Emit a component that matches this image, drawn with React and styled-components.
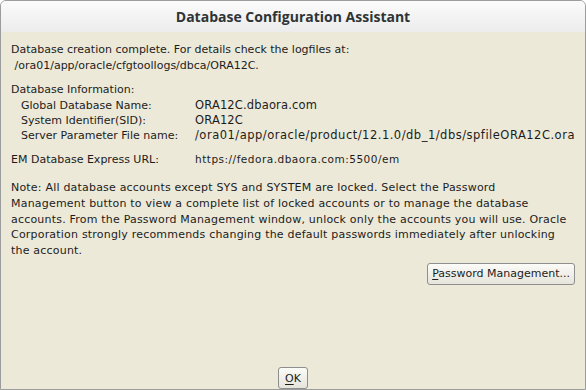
import styled, { createGlobalStyle } from "styled-components";

const GlobalStyle = createGlobalStyle`
  html, body {
    margin: 0;
    padding: 0;
    background: #ffffff;
  }
`;

const Window = styled.div`
  width: 586px;
  height: 390px;
  box-sizing: border-box;
  display: flex;
  flex-direction: column;
  border: 1px solid #9c9c9c;
  border-radius: 6px 6px 0 0;
  overflow: hidden;
  background: #ece9d8;
`;

const TitleBar = styled.div`
  height: 31px;
  flex: none;
  display: flex;
  align-items: center;
  justify-content: center;
  background: linear-gradient(#fbfbfb, #ececec);
  font-family: "Open Sans", sans-serif;
  font-weight: 700;
  font-size: 14px;
  color: #2e3436;
`;

const Body = styled.div`
  flex: 1;
  display: flex;
  flex-direction: column;
  padding: 10px 10px 0 10px;
  font-family: "DejaVu Sans", sans-serif;
  font-size: 11px;
  color: #1c1c1c;
`;

const Para = styled.div`
  line-height: ${(p) => p.lh || 16}px;
  margin-bottom: ${(p) => p.gap || 0}px;
  letter-spacing: ${(p) => p.spacing || 0}px;
  white-space: pre;
`;

const InfoGrid = styled.div`
  display: grid;
  grid-template-columns: 184px 1fr;
  line-height: 15px;
  margin-bottom: ${(p) => p.gap || 0}px;
  white-space: nowrap;
`;

const Label = styled.span`
  padding-left: ${(p) => p.indent || 0}px;
`;

const Value = styled.span`
  font-size: ${(p) => p.size || 11.5}px;
  letter-spacing: ${(p) => p.spacing || 0.15}px;
`;

const ButtonRow = styled.div`
  display: flex;
  justify-content: ${(p) => p.align || "flex-end"};
  margin-top: ${(p) => p.top || 0}px;
`;

const Spacer = styled.div`
  flex: 1;
`;

const Button = styled.button`
  height: 22px;
  padding: 0 ${(p) => p.pad || 6}px;
  border: 1px solid #8e8e8e;
  border-radius: 3px;
  background: linear-gradient(#fbfbf8, #e6e4da);
  font-family: "DejaVu Sans", sans-serif;
  font-size: 11px;
  color: #1c1c1c;
  cursor: pointer;
  u {
    text-decoration: underline;
    text-underline-offset: 2px;
  }
`;

const noteLines = [
  "Note: All database accounts except SYS and SYSTEM are locked. Select the Password",
  "Management button to view a complete list of locked accounts or to manage the database",
  "accounts. From the Password Management window, unlock only the accounts you will use. Oracle",
  "Corporation strongly recommends changing the default passwords immediately after unlocking",
  "the account.",
];

export default function App() {
  return (
    <>
      <GlobalStyle />
      <Window>
        <TitleBar>Database Configuration Assistant</TitleBar>
        <Body>
          <Para gap={8}>
            {"Database creation complete. For details check the logfiles at:\n /ora01/app/oracle/cfgtoollogs/dbca/ORA12C."}
          </Para>
          <Para>Database Information:</Para>
          <InfoGrid gap={9}>
            <Label indent={10}>Global Database Name:</Label>
            <Value>ORA12C.dbaora.com</Value>
            <Label indent={10}>System Identifier(SID):</Label>
            <Value>ORA12C</Value>
            <Label indent={10}>Server Parameter File name:</Label>
            <Value spacing={0.5}>/ora01/app/oracle/product/12.1.0/db_1/dbs/spfileORA12C.ora</Value>
          </InfoGrid>
          <InfoGrid gap={13}>
            <Label>EM Database Express URL:</Label>
            <Value size={10.5} spacing={0.5}>
              https://fedora.dbaora.com:5500/em
            </Value>
          </InfoGrid>
          <Para lh={15.75} spacing={0.2}>
            {noteLines.join("\n")}
          </Para>
          <ButtonRow top={4}>
            <Button pad={4}>
              <u>P</u>assword Management...
            </Button>
          </ButtonRow>
          <Spacer />
          <ButtonRow align="center">
            <Button pad={6}>
              <u>O</u>K
            </Button>
          </ButtonRow>
        </Body>
      </Window>
    </>
  );
}
